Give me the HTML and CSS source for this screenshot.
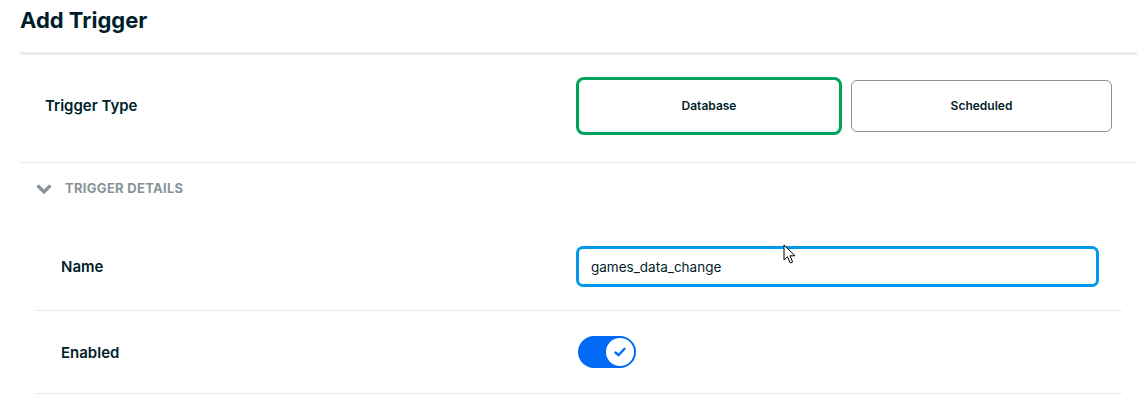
FILE: index.html
```html
<!DOCTYPE html>
<html>
<head>
<meta charset="utf-8">
<link rel="stylesheet" href="styles.css">
</head>
<body>
<div class="page">
  <header class="header"><h1 class="title">Add Trigger</h1></header>
  <div class="row row-type">
    <div class="label label-top">Trigger Type</div>
    <div class="type-buttons">
      <button class="type-btn selected">Database</button>
      <button class="type-btn">Scheduled</button>
    </div>
  </div>
  <div class="section-head">
    <svg class="chev" width="16" height="10" viewBox="0 0 16 10"><path d="M1.5 1.5 L8 8 L14.5 1.5" fill="none" stroke="#889397" stroke-width="3.2" stroke-linecap="butt" stroke-linejoin="miter"/></svg>
    <span class="section-title">TRIGGER DETAILS</span>
  </div>
  <div class="details">
    <div class="row row-name">
      <div class="label">Name</div>
      <div class="input">games_data_change</div>
    </div>
    <div class="row row-enabled">
      <div class="label">Enabled</div>
      <div class="toggle">
        <div class="knob">
          <svg width="14" height="12" viewBox="0 0 14 12"><path d="M2.5 6.5 L5.5 9.2 L11.5 2.8" fill="none" stroke="#016bf8" stroke-width="2.4" stroke-linecap="round" stroke-linejoin="round"/></svg>
        </div>
      </div>
    </div>
  </div>
  <svg class="cursor" width="14" height="22" viewBox="0 0 14 22"><path d="M1 1 L1 16 L4.5 12.8 L7.2 19 L9.6 18 L7 11.8 L12 11.8 Z" fill="#fff" stroke="#000" stroke-width="1" stroke-linejoin="miter"/></svg>
</div>
</body>
</html>
```

FILE: styles.css
```css
* { box-sizing: border-box; }
html, body { margin: 0; padding: 0; background: #fff; }
body {
  font-family: "Inter", "Lato", "Liberation Sans", sans-serif;
  color: #001e2b;
}
.page {
  position: relative;
  width: 1147px;
  height: 401px;
  overflow: hidden;
}
.header {
  margin: 0 10px 0 20px;
  height: 55px;
  border-bottom: 3px solid #e8edeb;
}
.title {
  margin: 0;
  padding-top: 6px;
  font-size: 22px;
  line-height: 28px;
  font-weight: 700;
  letter-spacing: 0;
}
.row {
  display: flex;
  align-items: center;
}
.label {
  font-size: 15px;
  font-weight: 600;
  flex: none;
}
.row-type {
  margin: 0 10px 0 20px;
  height: 108px;
  padding-bottom: 6px;
  border-bottom: 1px solid #e8edeb;
}
.label-top {
  width: 556px;
  padding-left: 25px;
}
.type-buttons {
  display: flex;
  align-items: center;
  gap: 9px;
}
.type-btn {
  font-family: inherit;
  font-size: 12px;
  font-weight: 600;
  color: #001e2b;
  background: #fff;
  border: 1px solid #889397;
  border-radius: 6px;
  width: 261px;
  height: 52px;
  padding: 0;
}
.type-btn.selected {
  width: 266px;
  height: 58px;
  border: 3px solid #00a35c;
  border-radius: 8px;
}
.section-head {
  height: 60px;
  display: flex;
  align-items: center;
  padding-left: 36px;
  padding-bottom: 10px;
}
.chev { margin-right: 13px; margin-top: 1px; }
.section-title {
  font-size: 13px;
  font-weight: 700;
  color: #889397;
  letter-spacing: 0.3px;
}
.details {
  margin: 0 25px 0 35px;
}
.row-name {
  height: 88px;
  border-bottom: 1px solid #e8edeb;
}
.row-enabled {
  height: 83px;
  border-bottom: 1px solid #e8edeb;
}
.details .label {
  width: 541px;
  padding-left: 26px;
}
.input {
  width: 523px;
  height: 41px;
  border: 3px solid #0498ec;
  border-radius: 7px;
  padding-left: 12px;
  display: flex;
  align-items: center;
  font-size: 13.5px;
  color: #001e2b;
}
.toggle {
  margin-left: 2px;
  width: 58px;
  height: 32px;
  border-radius: 16px;
  background: #016bf8;
  position: relative;
}
.knob {
  position: absolute;
  right: 2px;
  top: 2px;
  width: 28px;
  height: 28px;
  border-radius: 50%;
  background: #fff;
  display: flex;
  align-items: center;
  justify-content: center;
}
.cursor {
  position: absolute;
  left: 783px;
  top: 244px;
}
```
